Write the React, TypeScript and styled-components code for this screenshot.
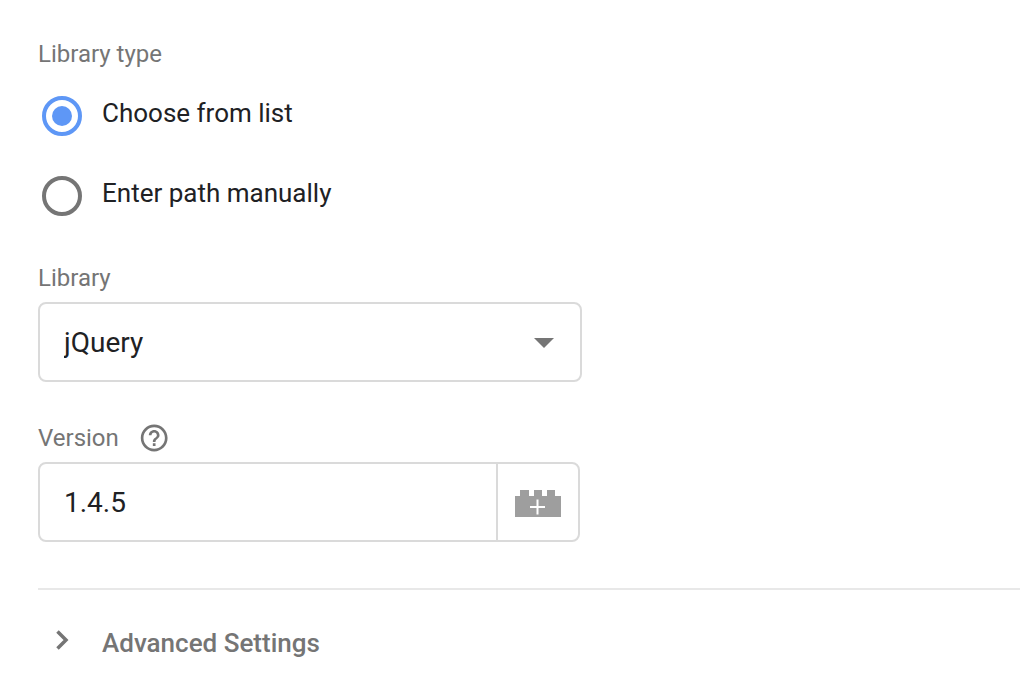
import { useState } from "react";
import styled, { createGlobalStyle } from "styled-components";

const GlobalStyle = createGlobalStyle`
  *, *::before, *::after { box-sizing: border-box; }
  body {
    margin: 0;
    background: #fff;
    color: #202124;
    font-family: Roboto, "Liberation Sans", sans-serif;
  }
`;

const Form = styled.form`
  display: flex;
  flex-direction: column;
  padding: 40px 0 28px 38px;
`;

const RadioGroup = styled.fieldset`
  display: flex;
  flex-direction: column;
  gap: 40px;
  margin: 0 0 48px;
  padding: 0;
  border: 0;
  min-width: 0;
`;

const Legend = styled.legend`
  padding: 0;
  margin-bottom: 28px;
  font-size: 24px;
  line-height: 28px;
  color: #757575;
`;

const RadioRow = styled.label`
  display: flex;
  align-items: flex-start;
  gap: 20px;
  padding-left: 4px;
  font-size: 26px;
  line-height: 34px;
  cursor: pointer;
`;

const Radio = styled.input`
  appearance: none;
  flex: none;
  display: grid;
  place-items: center;
  width: 40px;
  height: 40px;
  margin: 0;
  border: 4px solid #757575;
  border-radius: 50%;
  cursor: pointer;

  &:checked {
    border-color: #5e97f6;
  }
  &:checked::before {
    content: "";
    width: 20px;
    height: 20px;
    border-radius: 50%;
    background: #5e97f6;
  }
`;

const Field = styled.div`
  display: flex;
  flex-direction: column;
  gap: 10px;
  max-width: 544px;
  margin-bottom: 42px;
`;

const LabelRow = styled.div`
  display: flex;
  align-items: center;
  gap: 20px;
  height: 28px;
`;

const FieldLabel = styled.label`
  font-size: 24px;
  line-height: 28px;
  color: #757575;
`;

const HelpButton = styled.button`
  display: flex;
  padding: 0;
  border: 0;
  background: none;
  color: #757575;
  cursor: pointer;
`;

const SelectBox = styled.div`
  display: grid;
  align-items: center;

  > * { grid-area: 1 / 1; }
  > svg {
    justify-self: end;
    margin-right: 28px;
    pointer-events: none;
  }
`;

const Select = styled.select`
  appearance: none;
  width: 100%;
  height: 80px;
  padding: 0 60px 0 24px;
  border: 2px solid #dadada;
  border-radius: 8px;
  background: #fff;
  color: inherit;
  font: inherit;
  font-size: 28px;
`;

const InputGroup = styled.div`
  display: flex;
  height: 80px;
  margin-right: 2px;
  border: 2px solid #dadada;
  border-radius: 8px;
`;

const TextInput = styled.input`
  flex: 1;
  min-width: 0;
  padding: 0 24px;
  border: 0;
  border-radius: 8px;
  background: none;
  color: inherit;
  font: inherit;
  font-size: 28px;
`;

const VariableButton = styled.button`
  display: flex;
  align-items: center;
  justify-content: center;
  width: 82px;
  padding: 0;
  border: 0;
  border-left: 2px solid #dadada;
  background: none;
  cursor: pointer;
`;

const Divider = styled.hr`
  width: 100%;
  height: 2px;
  margin: 4px 0 0;
  border: 0;
  background: #e8e8e8;
`;

const AdvancedToggle = styled.button`
  display: flex;
  align-items: flex-start;
  gap: 28px;
  align-self: flex-start;
  padding: 38px 0 0 12px;
  border: 0;
  background: none;
  color: #757575;
  font: inherit;
  font-size: 26px;
  font-weight: 500;
  line-height: 30px;
  cursor: pointer;
`;

const HelpIcon = () => (
  <svg width="30" height="28" viewBox="0 0 30 28" fill="currentColor" aria-hidden="true">
    <path
      transform="translate(-.9 -2.100) scale(1.340)"
      d="M11 18h2v-2h-2v2zm1-16C6.480 2 2 6.480 2 12s4.480 10 10 10 10-4.480 10-10S17.520 2 12 2zm0 18c-4.410 0-8-3.590-8-8s3.590-8 8-8 8 3.590 8 8-3.590 8-8 8zm0-14c-2.210 0-4 1.790-4 4h2c0-1.100.9-2 2-2s2 .9 2 2c0 2-3 1.750-3 5h2c0-2.250 3-2.500 3-5 0-2.210-1.790-4-4-4z"
    />
  </svg>
);

const BrickIcon = () => (
  <svg width="46" height="30" viewBox="0 0 46 30" aria-hidden="true">
    <path d="M0 9h5V3h9v6h5V3h8v6h5V3h8v6h6v21H0z" fill="#9e9e9e" />
    <path d="M15 20h15M22.500 12.500v15" stroke="#fff" strokeWidth="2" />
  </svg>
);

export default function App() {
  const [source, setSource] = useState("list");
  const [version, setVersion] = useState("1.4.5");
  const [open, setOpen] = useState(false);

  return (
    <>
      <GlobalStyle />
      <Form>
        <RadioGroup>
          <Legend>Library type</Legend>
          <RadioRow>
            <Radio type="radio" name="source" checked={source === "list"} onChange={() => setSource("list")} />
            Choose from list
          </RadioRow>
          <RadioRow>
            <Radio type="radio" name="source" checked={source === "path"} onChange={() => setSource("path")} />
            Enter path manually
          </RadioRow>
        </RadioGroup>

        <Field>
          <FieldLabel htmlFor="library">Library</FieldLabel>
          <SelectBox>
            <Select id="library" defaultValue="jquery">
              <option value="jquery">jQuery</option>
            </Select>
            <svg width="20" height="12" viewBox="0 0 20 12" aria-hidden="true">
              <path d="M0 2h20L10 12z" fill="#757575" />
            </svg>
          </SelectBox>
        </Field>

        <Field>
          <LabelRow>
            <FieldLabel htmlFor="version">Version</FieldLabel>
            <HelpButton type="button" aria-label="Version help">
              <HelpIcon />
            </HelpButton>
          </LabelRow>
          <InputGroup>
            <TextInput id="version" type="text" value={version} onChange={(e) => setVersion(e.target.value)} />
            <VariableButton type="button" aria-label="Insert variable">
              <BrickIcon />
            </VariableButton>
          </InputGroup>
        </Field>

        <Divider />
        <AdvancedToggle type="button" aria-expanded={open} onClick={() => setOpen(!open)}>
          <svg width="24" height="24" viewBox="0 0 24 24" aria-hidden="true">
            <path d="M7.500 3.500L16 12l-8.500 8.500" fill="none" stroke="#757575" strokeWidth="3.500" />
          </svg>
          Advanced Settings
        </AdvancedToggle>
      </Form>
    </>
  );
}
